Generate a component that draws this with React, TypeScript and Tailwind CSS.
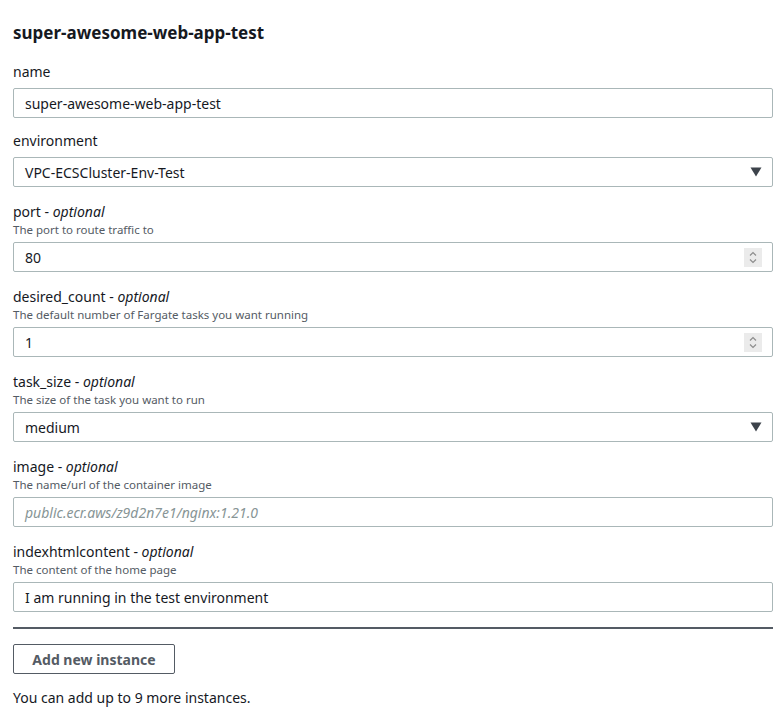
const Spinner = () => (
    <div className="flex h-[19px] w-[18px] flex-col items-center justify-center gap-[3px] bg-[#ebebeb]">
        <svg width="8" height="5" viewBox="0 0 8 5" fill="none">
            <path d="M1 4.5 L4 1.5 L7 4.5" stroke="#8d8d8d" strokeWidth="1.2" />
        </svg>
        <svg width="8" height="5" viewBox="0 0 8 5" fill="none">
            <path d="M1 0.5 L4 3.5 L7 0.5" stroke="#8d8d8d" strokeWidth="1.2" />
        </svg>
    </div>
);

const Caret = () => (
    <svg width="12" height="10" viewBox="0 0 12 10">
        <path d="M0.5 0.5 H11.5 L6 9.5 Z" fill="#3d434b" />
    </svg>
);

type FieldProps = {
    label: string;
    optional?: boolean;
    description?: string;
    value?: string;
    placeholder?: string;
    kind?: "text" | "select" | "number";
};

const Field = ({ label, optional, description, value, placeholder, kind = "text" }: FieldProps) => (
    <div className={description ? "mt-[15px] flex flex-col" : "mt-[13px] flex flex-col first:mt-0"}>
        <div className="text-[14px] leading-[20px] text-[#16191f]">
            {label}
            {optional && (
                <>
                    {" - "}
                    <i>optional</i>
                </>
            )}
        </div>
        {description && (
            <div className="text-[11.5px] leading-[16px] text-[#545b64]">{description}</div>
        )}
        <div
            className={
                description
                    ? "mt-[4px] flex h-[30px] items-center justify-between rounded-[2px] border border-[#aab7b8] bg-white pl-[11px] pr-[10px]"
                    : "mt-[6px] flex h-[30px] items-center justify-between rounded-[2px] border border-[#aab7b8] bg-white pl-[11px] pr-[10px]"
            }
        >
            {value ? (
                <span className="text-[14px] text-[#16191f]">{value}</span>
            ) : (
                <span className="text-[14px] italic text-[#879596]">{placeholder}</span>
            )}
            {kind === "select" && <Caret />}
            {kind === "number" && <Spinner />}
        </div>
    </div>
);

export default function App() {
    return (
        <div
            className="min-h-screen bg-white pl-[13px] pr-[10px] pt-[22px] text-[#16191f]"
            style={{ fontFamily: '"Noto Sans", "Open Sans", sans-serif' }}
        >
            <h1 className="text-[17px] font-bold leading-[22px]">super-awesome-web-app-test</h1>
            <div className="mt-[18px] flex flex-col">
                <Field label="name" value="super-awesome-web-app-test" />
                <Field label="environment" value="VPC-ECSCluster-Env-Test" kind="select" />
                <Field label="port" optional description="The port to route traffic to" value="80" kind="number" />
                <Field
                    label="desired_count"
                    optional
                    description="The default number of Fargate tasks you want running"
                    value="1"
                    kind="number"
                />
                <Field
                    label="task_size"
                    optional
                    description="The size of the task you want to run"
                    value="medium"
                    kind="select"
                />
                <Field
                    label="image"
                    optional
                    description="The name/url of the container image"
                    placeholder="public.ecr.aws/z9d2n7e1/nginx:1.21.0"
                />
                <Field
                    label="indexhtmlcontent"
                    optional
                    description="The content of the home page"
                    value="I am running in the test environment"
                />
            </div>
            <div className="mt-[15px] h-[2px] bg-[#545b64]" />
            <button className="mt-[15px] block h-[30px] w-[162px] rounded-[2px] border border-[#545b64] bg-white text-[14px] font-bold text-[#545b64]">
                Add new instance
            </button>
            <p className="mt-[14px] text-[14px] leading-[20px]">You can add up to 9 more instances.</p>
        </div>
    );
}
